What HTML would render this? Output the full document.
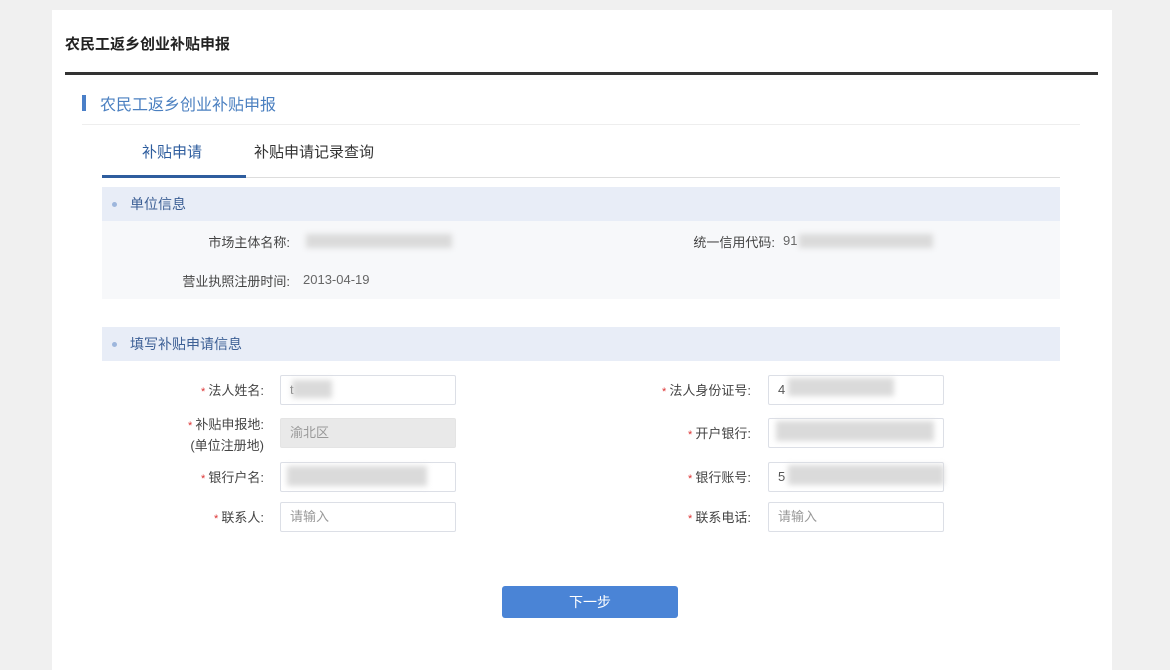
<!DOCTYPE html>
<html><head><meta charset="utf-8"><style>
*{margin:0;padding:0;box-sizing:border-box}
body{width:1170px;height:658px;background:#f0f0f0;position:relative;overflow:hidden;font-family:"Liberation Sans","Noto Sans CJK SC",sans-serif;color:#333;font-size:13px}
.a{position:absolute}
.panel{left:52px;top:10px;width:1060px;height:660px;background:#fff}
.lbl{position:absolute;text-align:right;font-size:13px;color:#444;white-space:nowrap}
.req:before{content:"* ";color:#d33;font-size:11px}
.inp{position:absolute;width:176px;height:30px;border:1px solid #dcdfe6;border-radius:2px;background:#fff;font-size:13px;color:#555;padding-left:9px;line-height:28px}
.blur{position:absolute;background:#dadada;filter:blur(3px)}
.dot{display:inline-block;width:5px;height:5px;border-radius:50%;background:#9db6dc;margin:0 13px 2px 10px;vertical-align:middle}
.band{position:absolute;left:102px;width:958px;height:34px;background:#e8edf7;font-size:14px;color:#3c5f95;line-height:34px}
</style></head><body>
<div class="a panel"></div>
<div class="a" style="left:65px;top:33px;font-size:15px;font-weight:bold;color:#222">农民工返乡创业补贴申报</div>
<div class="a" style="left:65px;top:72px;width:1033px;height:3px;background:#333"></div>
<div class="a" style="left:82px;top:95px;width:4px;height:16px;background:#4a7fc8"></div>
<div class="a" style="left:100px;top:91px;font-size:16px;color:#4a7fc0">农民工返乡创业补贴申报</div>
<div class="a" style="left:82px;top:124px;width:998px;height:1px;background:#eee"></div>
<div class="a" style="left:142px;top:141px;font-size:15px;color:#2e5d9e">补贴申请</div>
<div class="a" style="left:254px;top:141px;font-size:15px;color:#333">补贴申请记录查询</div>
<div class="a" style="left:102px;top:177px;width:958px;height:1px;background:#ddd"></div>
<div class="a" style="left:102px;top:175px;width:144px;height:3px;background:#2e5d9e"></div>
<div class="band" style="top:187px"><span class="dot"></span>单位信息</div>
<div class="a" style="left:102px;top:221px;width:958px;height:78px;background:#f7f8fa"></div>
<div class="lbl" style="right:880px;top:232px">市场主体名称:</div>
<div class="blur" style="left:306px;top:234px;width:146px;height:14px"></div>
<div class="lbl" style="right:880px;top:271px">营业执照注册时间:</div>
<div class="a" style="left:303px;top:272px;color:#666">2013-04-19</div>
<div class="lbl" style="right:395px;top:232px">统一信用代码:</div>
<div class="a" style="left:783px;top:233px;color:#666">91</div>
<div class="blur" style="left:799px;top:234px;width:134px;height:14px"></div>
<div class="band" style="top:327px"><span class="dot"></span>填写补贴申请信息</div>
<div class="lbl req" style="right:906px;top:380px">法人姓名:</div>
<div class="inp" style="left:280px;top:375px">t</div>
<div class="blur" style="left:292px;top:380px;width:40px;height:18px"></div>
<div class="lbl req" style="right:906px;top:414px">补贴申报地:</div>
<div class="lbl" style="right:906px;top:435px">(单位注册地)</div>
<div class="inp" style="left:280px;top:418px;background:#e9e9e9;border-color:#e4e4e4;color:#999">渝北区</div>
<div class="lbl req" style="right:906px;top:467px">银行户名:</div>
<div class="inp" style="left:280px;top:462px"></div>
<div class="blur" style="left:287px;top:466px;width:140px;height:20px"></div>
<div class="lbl req" style="right:906px;top:507px">联系人:</div>
<div class="inp" style="left:280px;top:502px;color:#999">请输入</div>
<div class="lbl req" style="right:419px;top:380px">法人身份证号:</div>
<div class="inp" style="left:768px;top:375px">4</div>
<div class="blur" style="left:788px;top:378px;width:106px;height:18px"></div>
<div class="lbl req" style="right:419px;top:423px">开户银行:</div>
<div class="inp" style="left:768px;top:418px"></div>
<div class="blur" style="left:776px;top:421px;width:158px;height:20px"></div>
<div class="lbl req" style="right:419px;top:467px">银行账号:</div>
<div class="inp" style="left:768px;top:462px">5</div>
<div class="blur" style="left:788px;top:465px;width:156px;height:20px"></div>
<div class="lbl req" style="right:419px;top:507px">联系电话:</div>
<div class="inp" style="left:768px;top:502px;color:#999">请输入</div>
<div class="a" style="left:502px;top:586px;width:176px;height:32px;background:#4a84d6;border-radius:3px;color:#fff;font-size:14px;text-align:center;line-height:32px">下一步</div>
</body></html>
